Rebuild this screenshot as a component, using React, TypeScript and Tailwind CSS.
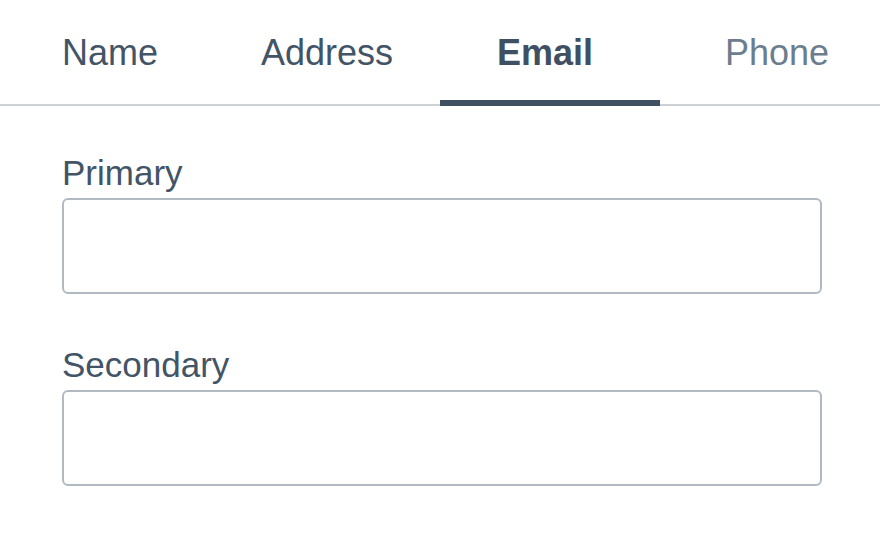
import { useState } from "react";

const tabs = [
  { label: "Name", pad: "pl-[62px]" },
  { label: "Address", pad: "pl-[41px]" },
  { label: "Email", pad: "pl-[57px]" },
  { label: "Phone", pad: "pl-[65px]" },
];

export default function App() {
  const [active, setActive] = useState("Email");

  return (
    <div className="min-h-screen w-[880px] bg-white font-['Liberation_Sans',Arial,sans-serif] text-[#425466]">
      <div className="flex border-b-2 border-[#ccd1d6]">
        {tabs.map((t) => {
          const on = t.label === active;
          return (
            <button
              key={t.label}
              type="button"
              onClick={() => setActive(t.label)}
              className={`relative flex h-[104px] w-[220px] items-start pt-[32px] text-left leading-[41px] text-[36px] ${t.pad} ${
                on ? "font-bold text-[#3f5063]" : t.label === "Phone" ? "text-[#6c7d8e]" : "text-[#425466]"
              }`}
            >
              <span className="block">{t.label}</span>
              {on && <span className="absolute bottom-[-2px] left-0 h-[6px] w-full bg-[#3f5063]" />}
            </button>
          );
        })}
      </div>

      <div className="pl-[62px] pt-[47px]">
        <label className="block text-[35px] leading-[40px]">Primary</label>
        <input
          type="email"
          className="mt-[5px] block h-[96px] w-[760px] rounded-md border-2 border-[#b1bac3] outline-none"
        />

        <label className="mt-[51px] block text-[35px] leading-[40px]">Secondary</label>
        <input
          type="email"
          className="mt-[5px] block h-[96px] w-[760px] rounded-md border-2 border-[#b1bac3] outline-none"
        />
      </div>
    </div>
  );
}
